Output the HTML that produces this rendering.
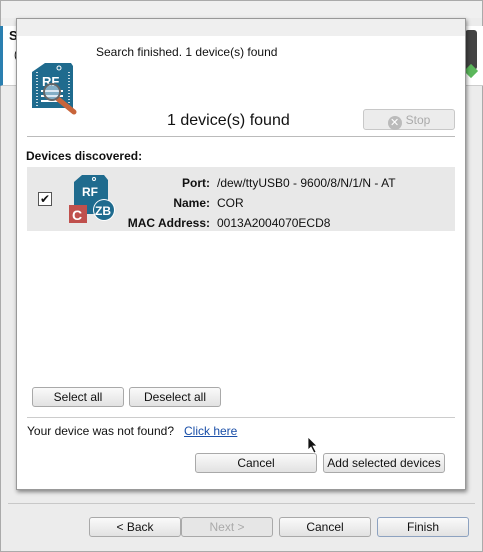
<!DOCTYPE html>
<html><head><style>
*{margin:0;padding:0;box-sizing:border-box}
body{width:483px;height:552px;overflow:hidden;background:#ececec;font-family:"Liberation Sans",sans-serif;font-size:12px;color:#111;position:relative}
.abs{position:absolute}
.btn{position:absolute;border:1px solid #a9a9a9;border-radius:3px;background:linear-gradient(#fafafa,#e2e2e2);text-align:center;font-size:12px;line-height:18px;color:#111}
</style></head><body>
<div class="abs" style="left:0;top:0;width:483px;height:552px;border:1px solid #aaa;background:#ececec"></div>
<div class="abs" style="left:1px;top:1px;width:481px;height:17px;background:#f0f0f0"></div>
<div class="abs" style="left:0;top:26px;width:483px;height:60px;background:#fff;border-left:3px solid #2a7fb0;border-bottom:1px solid #ccc"></div>
<div class="abs" style="left:9px;top:28px;font-weight:bold;font-size:13px">S</div>
<div class="abs" style="left:14px;top:49px;font-size:11px">(</div>
<div class="abs" style="left:8px;top:503px;width:467px;height:1px;background:#c8c8c8"></div>
<div class="btn" style="left:89px;top:517px;width:92px;height:20px">&lt; Back</div>
<div class="btn" style="left:181px;top:517px;width:92px;height:20px;color:#aaa;background:#e6e6e6">Next &gt;</div>
<div class="btn" style="left:279px;top:517px;width:92px;height:20px">Cancel</div>
<div class="btn" style="left:377px;top:517px;width:92px;height:20px;border-color:#8da2c0">Finish</div>
<div class="abs" style="left:465px;top:30px;width:12px;height:40px;background:#444;border-radius:3px"></div>
<div class="abs" style="left:466px;top:66px;width:10px;height:10px;background:#5cb85c;transform:rotate(45deg)"></div>
<div class="abs" style="left:16px;top:18px;width:450px;height:472px;background:#fff;border:1px solid #999;box-shadow:1px 2px 4px rgba(0,0,0,.45)"></div>
<div class="abs" style="left:17px;top:19px;width:448px;height:17px;background:#efefef"></div>
<div class="abs" style="left:96px;top:45px;font-size:12px">Search finished. 1 device(s) found</div>
<svg class="abs" style="left:31px;top:62px" width="48" height="54" viewBox="0 0 48 54">
<path d="M1 10 L14 1 L40 1 L42 4 L42 46 L1 46 Z" fill="#1f6b8e"/>
<circle cx="28" cy="6" r="2" fill="none" stroke="#fff" stroke-width="1"/>
<path d="M6 10 V44 M38 10 V44" stroke="#fff" stroke-dasharray="1 2" stroke-width="1.5"/>
<text x="11" y="24" font-family="Liberation Sans" font-weight="bold" font-size="13" fill="#fff">RF</text>
<rect x="10" y="28" width="22" height="2" fill="#fff"/><rect x="10" y="33" width="22" height="2" fill="#fff"/><rect x="10" y="38" width="22" height="2" fill="#fff"/>
<line x1="27" y1="37" x2="43" y2="50" stroke="#c8643a" stroke-width="5" stroke-linecap="round"/>
<circle cx="21" cy="30" r="8" fill="rgba(200,220,235,.6)" stroke="#666" stroke-width="2"/>
</svg>
<div class="abs" style="left:167px;top:112px;font-size:16px">1 device(s) found</div>
<div class="btn" style="left:363px;top:109px;width:92px;height:21px;color:#aaa;background:#ececec;border-color:#c8c8c8;line-height:20px"><span style="display:inline-block;width:14px;height:14px;border-radius:7px;background:#bbb;color:#fff;font-size:11px;line-height:14px;vertical-align:-2px;margin-right:4px">✕</span>Stop</div>
<div class="abs" style="left:27px;top:136px;width:428px;height:1px;background:#bbb"></div>
<div class="abs" style="left:26px;top:149px;font-weight:bold">Devices discovered:</div>
<div class="abs" style="left:27px;top:167px;width:428px;height:64px;background:#e8e8e8"></div>
<div class="abs" style="left:38px;top:192px;width:14px;height:14px;border:1px solid #555;background:#fff;font-size:12px;line-height:12px;text-align:center">✔</div>
<svg class="abs" style="left:68px;top:174px" width="50" height="50" viewBox="0 0 50 50">
<path d="M6 8 L14 1 L36 1 L40 6 L40 40 L6 40 Z" fill="#1f6b8e"/>
<circle cx="26" cy="5" r="1.5" fill="none" stroke="#fff"/>
<text x="14" y="22" font-family="Liberation Sans" font-weight="bold" font-size="12" fill="#fff">RF</text>
<rect x="1" y="31" width="18" height="18" fill="#c0504d"/>
<text x="4" y="46" font-family="Liberation Sans" font-weight="bold" font-size="14" fill="#fff">C</text>
<circle cx="36" cy="36" r="11" fill="#fff"/><circle cx="36" cy="36" r="10" fill="#1f6b8e"/>
<text x="27" y="41" font-family="Liberation Sans" font-weight="bold" font-size="12" fill="#fff">ZB</text>
</svg>
<div class="abs" style="left:120px;top:173px;width:90px;text-align:right;font-weight:bold;line-height:20px">Port:<br>Name:<br>MAC Address:</div>
<div class="abs" style="left:217px;top:173px;line-height:20px">/dew/ttyUSB0 - 9600/8/N/1/N - AT<br>COR<br>0013A2004070ECD8</div>
<div class="btn" style="left:32px;top:387px;width:92px;height:20px">Select all</div>
<div class="btn" style="left:129px;top:387px;width:92px;height:20px">Deselect all</div>
<div class="abs" style="left:27px;top:417px;width:428px;height:1px;background:#ccc"></div>
<div class="abs" style="left:27px;top:424px">Your device was not found?</div>
<div class="abs" style="left:184px;top:424px;color:#1a4fa8;text-decoration:underline">Click here</div>
<div class="btn" style="left:195px;top:453px;width:122px;height:20px">Cancel</div>
<div class="btn" style="left:323px;top:453px;width:122px;height:20px">Add selected devices</div>
<svg class="abs" style="left:307px;top:436px" width="12" height="18" viewBox="0 0 12 18"><path d="M1 1 L1 14 L4 11 L7 17 L9 16 L6 10 L10 10 Z" fill="#111" stroke="#fff" stroke-width="0.8"/></svg>
</body></html>
